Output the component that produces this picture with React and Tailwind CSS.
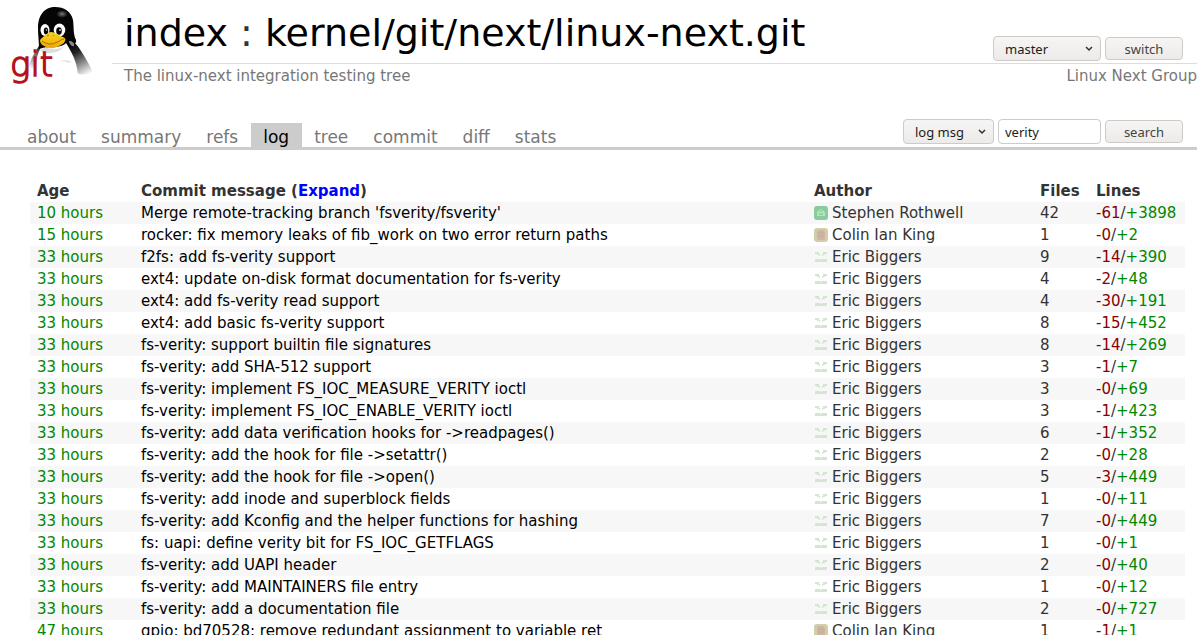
const tabs = ['about', 'summary', 'refs', 'log', 'tree', 'commit', 'diff', 'stats'];

const commits = [
  ['10 hours', "Merge remote-tracking branch 'fsverity/fsverity'", 'Stephen Rothwell', 42, 61, 3898],
  ['15 hours', 'rocker: fix memory leaks of fib_work on two error return paths', 'Colin Ian King', 1, 0, 2],
  ['33 hours', 'f2fs: add fs-verity support', 'Eric Biggers', 9, 14, 390],
  ['33 hours', 'ext4: update on-disk format documentation for fs-verity', 'Eric Biggers', 4, 2, 48],
  ['33 hours', 'ext4: add fs-verity read support', 'Eric Biggers', 4, 30, 191],
  ['33 hours', 'ext4: add basic fs-verity support', 'Eric Biggers', 8, 15, 452],
  ['33 hours', 'fs-verity: support builtin file signatures', 'Eric Biggers', 8, 14, 269],
  ['33 hours', 'fs-verity: add SHA-512 support', 'Eric Biggers', 3, 1, 7],
  ['33 hours', 'fs-verity: implement FS_IOC_MEASURE_VERITY ioctl', 'Eric Biggers', 3, 0, 69],
  ['33 hours', 'fs-verity: implement FS_IOC_ENABLE_VERITY ioctl', 'Eric Biggers', 3, 1, 423],
  ['33 hours', 'fs-verity: add data verification hooks for ->readpages()', 'Eric Biggers', 6, 1, 352],
  ['33 hours', 'fs-verity: add the hook for file ->setattr()', 'Eric Biggers', 2, 0, 28],
  ['33 hours', 'fs-verity: add the hook for file ->open()', 'Eric Biggers', 5, 3, 449],
  ['33 hours', 'fs-verity: add inode and superblock fields', 'Eric Biggers', 1, 0, 11],
  ['33 hours', 'fs-verity: add Kconfig and the helper functions for hashing', 'Eric Biggers', 7, 0, 449],
  ['33 hours', 'fs: uapi: define verity bit for FS_IOC_GETFLAGS', 'Eric Biggers', 1, 0, 1],
  ['33 hours', 'fs-verity: add UAPI header', 'Eric Biggers', 2, 0, 40],
  ['33 hours', 'fs-verity: add MAINTAINERS file entry', 'Eric Biggers', 1, 0, 12],
  ['33 hours', 'fs-verity: add a documentation file', 'Eric Biggers', 2, 0, 727],
  ['47 hours', 'gpio: bd70528: remove redundant assignment to variable ret', 'Colin Ian King', 1, 1, 1],
];

const controlClass =
  "border border-[#cdcac7] rounded-[4px] text-[13px] leading-4 font-['Noto_Sans','Open_Sans',sans-serif]";
const raisedClass = 'bg-linear-to-b from-[#f6f5f4] to-[#edebe9]';

function Logo() {
  return (
    <svg width="90" height="88" viewBox="8 0 90 88" role="img" aria-label="git">
      <defs>
        <linearGradient id="body" gradientUnits="userSpaceOnUse" x1="68" y1="44" x2="86" y2="76">
          <stop offset="0" stopColor="#000" />
          <stop offset="0.3" stopColor="#222" />
          <stop offset="1" stopColor="#fff" />
        </linearGradient>
        <linearGradient id="wing" gradientUnits="userSpaceOnUse" x1="41" y1="46" x2="29" y2="68">
          <stop offset="0" stopColor="#111" />
          <stop offset="1" stopColor="#fff" />
        </linearGradient>
        <linearGradient id="beak" x1="0" y1="0" x2="0" y2="1">
          <stop offset="0" stopColor="#f9d21c" />
          <stop offset="1" stopColor="#eda90b" />
        </linearGradient>
        <radialGradient id="shine">
          <stop offset="0" stopColor="#777" />
          <stop offset="1" stopColor="#000" />
        </radialGradient>
      </defs>
      <path d="M39 46C36 50 30 60 28 68L35 68C38 62 42 54 44 50Z" fill="url(#wing)" />
      <path d="M65 40C74 39 78 46 83 54C87 61 91 67 93 73C88 75 80 75 77 73C76 64 68 55 60 48Z" fill="url(#body)" />
      <path d="M55 7C43 7 38 17 38 28C38 36 39 41 39 49L46 51L66 47C72 46 77 44 76 40C73 34 74 27 73 20C71 11 64 7 55 7Z" fill="#050505" />
      <ellipse cx="62" cy="14" rx="6" ry="4" fill="url(#shine)" />
      <path d="M40 49C43 46 62 49 66 43C71 51 77 61 78 75H36C36 65 36 57 40 49Z" fill="#fff" />
      <path d="M40 50C46 56 61 53 65 45C63 49 51 51 46 47Z" fill="#ddd" />
      <path d="M60 62C63 59 68 60 72 62L68 63C65 61 62 61 60 62Z" fill="#e5e5e5" />
      <path d="M69 41C72 41 75 43 74 46C72 47 69 44 69 41Z" fill="#888" />
      <ellipse cx="45" cy="30" rx="4.500" ry="6" fill="#fff" />
      <ellipse cx="59.500" cy="30" rx="5.800" ry="6.500" fill="#fff" />
      <ellipse cx="46" cy="31" rx="2.200" ry="3.500" fill="#050505" />
      <ellipse cx="59" cy="31" rx="2.800" ry="3.800" fill="#050505" />
      <circle cx="46.500" cy="30" r="0.800" fill="#ccc" />
      <circle cx="60" cy="30" r="1" fill="#ccc" />
      <path d="M40 40C42 37 46 35 48 33C52 30 56 34 63 37C67 39 65 41 64 43C59 46 55 49 50 48C45 47 40 45 40 40Z" fill="url(#beak)" />
      <path d="M42 41C46 44 51 45 55 43C59 42 61 39 64 39" fill="none" stroke="#9a6508" strokeWidth="0.900" />
      <path d="M47 36L49 35M53 35L54 36" stroke="#9a6508" strokeWidth="0.800" />
      <text
        x="10"
        y="76"
        fontSize="34"
        fill="#b5121b"
        stroke="#b5121b"
        strokeWidth="1.500"
        fontFamily="DejaVu Sans Light, DejaVu Sans, sans-serif"
        fontWeight="200"
      >
        git
      </text>
    </svg>
  );
}

function Avatar({ author }) {
  if (author === 'Stephen Rothwell') {
    return (
      <svg width="14" height="14" viewBox="0 0 14 14" aria-hidden="true">
        <rect width="14" height="14" rx="3" fill="#8acb9b" />
        <path d="M3 6L7 3L11 6V10H3Z" fill="#b5e3bf" />
        <path d="M5 8H9M6 5H8" stroke="#77bd8a" />
      </svg>
    );
  }
  if (author === 'Colin Ian King') {
    return (
      <svg width="14" height="14" viewBox="0 0 14 14" aria-hidden="true">
        <rect width="14" height="14" rx="3" fill="#d2ceaa" />
        <rect x="3" y="2" width="8" height="10" rx="2" fill="#cdb7a2" />
        <path d="M4 5H10M4 8H10" stroke="#c3aa98" />
      </svg>
    );
  }
  return (
    <svg width="14" height="14" viewBox="0 0 14 14" aria-hidden="true">
      <path d="M1 2H5V4H6V6H8V4H9V2H13V4H11V5H9V6H5V5H3V4H1Z" fill="#d3e6d0" />
      <path d="M1 9H6L7 10L8 9H13V12H1Z" fill="#d3e6d0" />
    </svg>
  );
}

function Dropdown({ label, value, className }) {
  return (
    <div className={`grid items-center ${className}`}>
      <select
        aria-label={label}
        className={`appearance-none col-start-1 row-start-1 w-full h-[25px] pl-[11px] ${controlClass} ${raisedClass} text-[#1c1c1c]`}
      >
        <option>{value}</option>
      </select>
      <svg
        className="col-start-1 row-start-1 justify-self-end mr-2 pointer-events-none"
        width="8"
        height="8"
        viewBox="0 0 8 8"
        fill="none"
        stroke="#2e3436"
        strokeWidth="1.500"
        aria-hidden="true"
      >
        <path d="M1 2L4 5L7 2" />
      </svg>
    </div>
  );
}

function Header() {
  return (
    <header className="flex pl-2 pr-[3px]">
      <a href="#" className="w-[104px] shrink-0">
        <Logo />
      </a>
      <div className="grow">
        <div className="flex items-end justify-between h-16 border-b border-[#ddd]">
          <h1 className="pl-3 pb-1 text-[38px] leading-[52px]">
            <a href="#" className="text-black">index</a> : <a href="#" className="text-black">kernel/git/next/linux-next.git</a>
          </h1>
          <form className="flex items-center gap-1 mr-[14px] mb-[2px]">
            <Dropdown label="Branch" value="master" className="w-[108px]" />
            <button type="button" className={`w-[78px] h-[23px] ${controlClass} ${raisedClass} text-[#444]`}>
              switch
            </button>
          </form>
        </div>
        <div className="flex justify-between pl-3 text-[15px] leading-6 text-[#777]">
          <span>The linux-next integration testing tree</span>
          <span>Linux Next Group</span>
        </div>
      </div>
    </header>
  );
}

function TabBar() {
  return (
    <div className="flex items-end justify-between mt-[31px] mr-[3px] pl-[15px] border-b-[3px] border-[#ccc]">
      <nav className="flex">
        {tabs.map((tab) => (
          <a
            key={tab}
            href="#"
            className={`pl-3 pr-[13px] pt-1 text-[17px] leading-5 ${
              tab === 'log' ? 'bg-[#ccc] text-black' : 'text-[#777]'
            }`}
          >
            {tab}
          </a>
        ))}
      </nav>
      <form className="flex items-center gap-1 mr-[14px] mb-[3px]">
        <Dropdown label="Search in" value="log msg" className="w-[91px]" />
        <input
          type="text"
          aria-label="Search term"
          defaultValue="verity"
          className={`w-[103px] h-[25px] px-[6px] bg-white ${controlClass} text-[#1c1c1c]`}
        />
        <button type="button" className={`w-[78px] h-[23px] ${controlClass} ${raisedClass} text-[#444]`}>
          search
        </button>
      </form>
    </div>
  );
}

function CommitTable() {
  return (
    <table className="w-full table-fixed text-left whitespace-nowrap">
      <thead>
        <tr className="h-[22px]">
          <th className="w-[104px] pl-[7px]">Age</th>
          <th className="pl-[7px]">
            Commit message (<a href="#" className="text-[#00f]">Expand</a>)
          </th>
          <th className="w-[226px] pl-[7px]">Author</th>
          <th className="w-[56px] pl-[7px]">Files</th>
          <th className="w-[96px] pl-[7px]">Lines</th>
        </tr>
      </thead>
      <tbody>
        {commits.map(([age, message, author, files, removed, added]) => (
          <tr key={message} className="h-[22px] odd:bg-[#f7f7f7]">
            <td className="pl-[7px] text-[#080]">{age}</td>
            <td className="pl-[7px]">
              <a href="#" className="text-black">{message}</a>
            </td>
            <td className="pl-[7px]">
              <span className="flex items-center gap-1">
                <Avatar author={author} />
                {author}
              </span>
            </td>
            <td className="pl-[7px]">{files}</td>
            <td className="pl-[7px]">
              <span className="text-[#800]">-{removed}</span>/<span className="text-[#080]">+{added}</span>
            </td>
          </tr>
        ))}
      </tbody>
    </table>
  );
}

export default function App() {
  return (
    <div className="h-screen overflow-hidden bg-white font-['DejaVu_Sans',sans-serif] text-[15px] leading-[22px] text-[#333]">
      <Header />
      <TabBar />
      <main className="pt-[30px] pl-[30px] pr-[15px]">
        <CommitTable />
      </main>
    </div>
  );
}
